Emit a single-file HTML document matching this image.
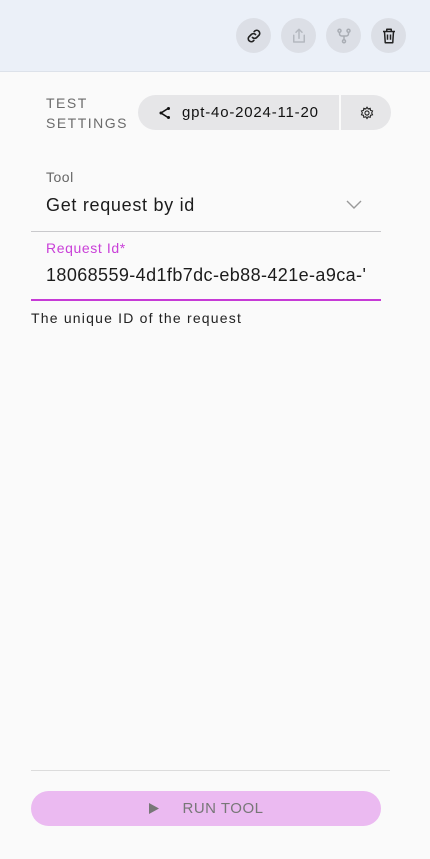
<!DOCTYPE html>
<html><head><style>
*{margin:0;padding:0;box-sizing:border-box}
body{width:430px;height:859px;background:#fafafa;font-family:"Liberation Sans",sans-serif;position:relative;overflow:hidden;color:#1c1c1c}
.hdr{position:absolute;left:0;top:0;width:430px;height:72px;background:#ebf0f8;border-bottom:1px solid #dde2ea}
.ib{position:absolute;top:18px;width:35px;height:35px;border-radius:50%;background:#dcdfe6;display:flex;align-items:center;justify-content:center}
.a{position:absolute;white-space:nowrap}
</style></head><body>
<div class="hdr">
 <div class="ib" style="left:236px"><svg width="18" height="18" viewBox="0 0 24 24" fill="none" stroke="#222" stroke-width="2.2" stroke-linecap="round"><path d="M10 14a4 4 0 0 0 5.6 0l3.2-3.2a4 4 0 0 0-5.6-5.6l-1 1"/><path d="M14 10a4 4 0 0 0-5.6 0l-3.2 3.2a4 4 0 0 0 5.6 5.6l1-1"/></svg></div>
 <div class="ib" style="left:281px"><svg width="18" height="18" viewBox="0 0 24 24" fill="none" stroke="#b4b8bf" stroke-width="2" stroke-linecap="round" stroke-linejoin="round"><path d="M12 3v12M8 7l4-4 4 4"/><path d="M5 11v9h14v-9"/></svg></div>
 <div class="ib" style="left:326px"><svg width="18" height="18" viewBox="0 0 24 24" fill="none" stroke="#a9adb4" stroke-width="2"><circle cx="6" cy="5" r="2"/><circle cx="18" cy="5" r="2"/><circle cx="12" cy="19" r="2"/><path d="M6 7v2a3 3 0 0 0 3 3h6a3 3 0 0 0 3-3V7M12 12v5"/></svg></div>
 <div class="ib" style="left:371px"><svg width="18" height="18" viewBox="0 0 24 24" fill="none" stroke="#222" stroke-width="2" stroke-linejoin="round"><path d="M4 6h16M9 6V3h6v3M6 6l1 15h10l1-15M10 10v7M14 10v7"/></svg></div>
</div>
<div class="a" style="left:46px;top:93px;font-size:14px;letter-spacing:1.5px;line-height:20px;color:#6b6b6b">TEST<br>SETTINGS</div>
<div class="a" style="left:138px;top:95px;width:253px;height:35px;border-radius:18px;background:#e6e6e8;display:flex;align-items:center">
 <svg style="margin-left:20px" width="14" height="14" viewBox="0 0 14 14" fill="#111" stroke="#111" stroke-width="1.6"><path d="M10 2.5L3 7l7 4.5" fill="none"/><circle cx="10.5" cy="2.5" r="1.5" stroke="none"/><circle cx="3" cy="7" r="1.5" stroke="none"/><circle cx="10.5" cy="11.5" r="1.5" stroke="none"/></svg>
 <span style="margin-left:10px;font-size:15px;color:#111;letter-spacing:0.8px">gpt-4o-2024-11-20</span>
 <div style="position:absolute;left:201px;top:0;width:2px;height:35px;background:#fafafa"></div>
 <svg style="position:absolute;left:222px;top:11px" width="14" height="14" viewBox="0 0 24 24" fill="none" stroke="#222" stroke-width="1.8"><circle cx="12" cy="12" r="3.5"/><path d="M12 2l2 3 3.5-1 .5 3.5 3.5 1-1.5 3.5 1.5 3-3.5 1-.5 3.5-3.5-1-2 3-2-3-3.5 1-.5-3.5-3.5-1 1.5-3.5-1.5-3 3.5-1 .5-3.5 3.5 1z"/></svg>
</div>
<div class="a" style="left:46px;top:169px;font-size:14px;color:#666;letter-spacing:0.5px">Tool</div>
<div class="a" style="left:46px;top:195px;font-size:18px;color:#1c1c1c;letter-spacing:0.7px">Get request by id</div>
<svg class="a" style="left:346px;top:200px" width="16" height="10" viewBox="0 0 16 10" fill="none" stroke="#999" stroke-width="1.4"><path d="M1 1l7 7 7-7"/></svg>
<div class="a" style="left:31px;top:231px;width:350px;height:1px;background:#c9c9cc"></div>
<div class="a" style="left:46px;top:240px;font-size:14px;color:#c940d8;letter-spacing:0.6px">Request Id*</div>
<div class="a" style="left:46px;top:265px;font-size:18px;color:#1c1c1c;width:322px;overflow:hidden;letter-spacing:0.4px">18068559-4d1fb7dc-eb88-421e-a9ca-'</div>
<div class="a" style="left:31px;top:299px;width:350px;height:2px;background:#c63ad6"></div>
<div class="a" style="left:31px;top:310px;font-size:14px;color:#222;letter-spacing:1.2px">The unique ID of the request</div>
<div class="a" style="left:31px;top:770px;width:359px;height:1px;background:#dcdcdc"></div>
<div class="a" style="left:31px;top:791px;width:350px;height:35px;border-radius:18px;background:#ebbaf1;display:flex;align-items:center;justify-content:center;color:#777;font-size:15px;letter-spacing:0.5px">
 <svg width="10" height="11" viewBox="0 0 10 11" style="margin-right:24px"><path d="M0 0l10 5.5L0 11z" fill="#777"/></svg>RUN TOOL
</div>
</body></html>
